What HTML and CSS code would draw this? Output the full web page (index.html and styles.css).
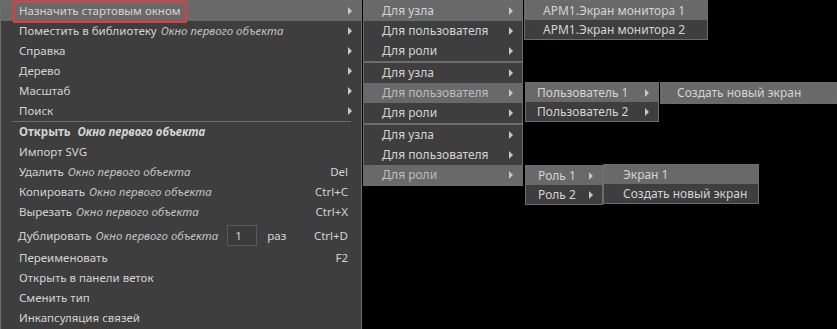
FILE: index.html
```html
<!DOCTYPE html>
<html lang="ru">
<head>
<meta charset="utf-8">
<title>Контекстное меню</title>
<link rel="stylesheet" href="styles.css">
</head>
<body>
<div class="stage">
  <div class="menu main">
    <div class="item active"><span class="label">Назначить стартовым окном</span><span class="arrow"></span></div>
    <div class="item"><span class="label">Поместить в библиотеку <i>Окно первого объекта</i></span><span class="arrow"></span></div>
    <div class="item"><span class="label">Справка</span><span class="arrow"></span></div>
    <div class="item"><span class="label">Дерево</span><span class="arrow"></span></div>
    <div class="item"><span class="label">Масштаб</span><span class="arrow"></span></div>
    <div class="item"><span class="label">Поиск</span><span class="arrow"></span></div>
    <div class="sep"></div>
    <div class="item"><span class="label"><b>Открыть <i>Окно первого объекта</i></b></span></div>
    <div class="item"><span class="label">Импорт SVG</span></div>
    <div class="item"><span class="label">Удалить <i>Окно первого объекта</i></span><span class="shortcut">Del</span></div>
    <div class="item"><span class="label">Копировать <i>Окно первого объекта</i></span><span class="shortcut">Ctrl+C</span></div>
    <div class="item"><span class="label">Вырезать <i>Окно первого объекта</i></span><span class="shortcut">Ctrl+X</span></div>
    <div class="item tall"><span class="label dup">Дублировать <i>Окно первого объекта</i><span class="num">1</span><span class="times">раз</span></span><span class="shortcut">Ctrl+D</span></div>
    <div class="item"><span class="label">Переименовать</span><span class="shortcut">F2</span></div>
    <div class="item"><span class="label">Открыть в панели веток</span></div>
    <div class="item"><span class="label">Сменить тип</span></div>
    <div class="item"><span class="label">Инкапсуляция связей</span></div>
    <div class="mark"></div>
  </div>

  <div class="col2">
    <div class="menu sub">
      <div class="item active"><span class="label">Для узла</span><span class="arrow"></span></div>
      <div class="item"><span class="label">Для пользователя</span><span class="arrow"></span></div>
      <div class="item"><span class="label">Для роли</span><span class="arrow"></span></div>
    </div>
    <div class="menu sub">
      <div class="item"><span class="label">Для узла</span><span class="arrow"></span></div>
      <div class="item active dim"><span class="label">Для пользователя</span><span class="arrow"></span></div>
      <div class="item"><span class="label">Для роли</span><span class="arrow"></span></div>
    </div>
    <div class="menu sub">
      <div class="item"><span class="label">Для узла</span><span class="arrow"></span></div>
      <div class="item"><span class="label">Для пользователя</span><span class="arrow"></span></div>
      <div class="item active dim"><span class="label">Для роли</span><span class="arrow"></span></div>
    </div>
  </div>

  <div class="menu pop arm">
    <div class="item active"><span class="label">АРМ1.Экран монитора 1</span></div>
    <div class="item"><span class="label">АРМ1.Экран монитора 2</span></div>
  </div>

  <div class="menu pop users">
    <div class="item active"><span class="label">Пользователь 1</span><span class="arrow"></span></div>
    <div class="item"><span class="label">Пользователь 2</span><span class="arrow"></span></div>
  </div>

  <div class="menu pop newscreen">
    <div class="item active"><span class="label">Создать новый экран</span></div>
  </div>

  <div class="menu pop roles">
    <div class="item active"><span class="label">Роль 1</span><span class="arrow"></span></div>
    <div class="item"><span class="label">Роль 2</span><span class="arrow"></span></div>
  </div>

  <div class="menu pop screens">
    <div class="item active"><span class="label">Экран 1</span></div>
    <div class="item"><span class="label">Создать новый экран</span></div>
  </div>
</div>
</body>
</html>
```

FILE: styles.css
```css
html, body {
  margin: 0;
  padding: 0;
  background: #000;
}

body {
  font-family: "Noto Sans", "Open Sans", "DejaVu Sans", sans-serif;
  font-size: 12px;
  color: #d4d4d4;
  overflow: hidden;
}

.stage {
  position: relative;
  width: 837px;
  height: 329px;
  display: flex;
  align-items: flex-start;
  gap: 1px;
}

.menu {
  background: #3e3e3e;
  border: 1px solid #6c6c6c;
  box-sizing: border-box;
}

.main {
  position: relative;
  width: 362px;
  height: 340px;
  font-size: 11.5px;
}

.item {
  display: flex;
  align-items: center;
  box-sizing: border-box;
  height: 20px;
  padding: 0 5px 2px 18px;
  white-space: nowrap;
}

.item.active {
  background: #696969;
}

.item.dim {
  color: #bdbdbd;
}

.item.tall {
  height: 26px;
  padding-bottom: 0;
}

.label {
  flex: 1;
  display: flex;
  align-items: center;
}

.label i {
  font-style: italic;
  color: #c4c4c4;
  margin-left: 4px;
}

.label b {
  font-weight: 700;
}

.label b i {
  color: #d4d4d4;
}

.shortcut {
  margin-right: 8px;
}

.arrow {
  width: 0;
  height: 0;
  border-top: 4px solid transparent;
  border-bottom: 4px solid transparent;
  border-left: 4px solid #c8c8c8;
  margin-right: 4px;
  margin-top: 2px;
}

.sep {
  height: 1px;
  background: #6c6c6c;
  margin: 0 10px 0 11px;
}

.dup {
  margin-left: -1px;
}

.num {
  display: inline-block;
  width: 30px;
  height: 21px;
  line-height: 19px;
  box-sizing: border-box;
  border: 1px solid #5a5a5a;
  background: #3a3a3a;
  margin-left: 9px;
  padding-left: 7px;
}

.times {
  margin-left: 10px;
}

.mark {
  position: absolute;
  left: 12px;
  top: 0;
  width: 174px;
  height: 22px;
  border: 2px solid #e8393f;
  box-sizing: border-box;
}

.col2 {
  display: flex;
  flex-direction: column;
  width: 160px;
}

.sub .item {
  padding-left: 18px;
}

.pop {
  position: absolute;
}

.pop .item {
  height: 19px;
  padding-bottom: 1px;
}

.arm {
  left: 524px;
  top: 0;
  width: 184px;
}

.arm .item {
  padding-left: 18px;
}

.users {
  left: 525px;
  top: 82px;
  width: 134px;
}

.users .item {
  padding-left: 11px;
}

.newscreen {
  left: 660px;
  top: 82px;
  width: 177px;
}

.newscreen .item {
  height: 20px;
  padding-left: 16px;
}

.roles {
  left: 525px;
  top: 165px;
  width: 78px;
}

.roles .item {
  padding-left: 12px;
}

.screens {
  left: 603px;
  top: 164px;
  width: 156px;
}

.screens .item {
  padding-left: 19px;
}
```
